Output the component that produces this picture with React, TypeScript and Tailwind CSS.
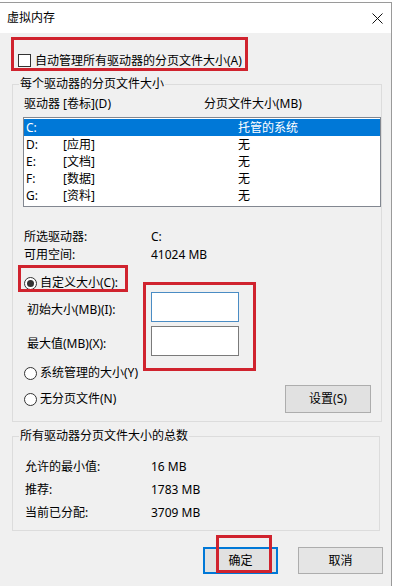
import React from "react";

const drives = [
  { letter: "C:", label: "", size: "托管的系统", selected: true },
  { letter: "D:", label: "[应用]", size: "无" },
  { letter: "E:", label: "[文档]", size: "无" },
  { letter: "F:", label: "[数据]", size: "无" },
  { letter: "G:", label: "[资料]", size: "无" },
];

export default function App() {
  return (
    <div className="relative h-[586px] w-[394px] overflow-hidden bg-white pt-[2px] font-['Noto_Sans','Noto_Sans_CJK_SC',sans-serif] text-[12px] leading-[16px] text-black">
      <div className="flex h-[584px] w-[392px] flex-col border-t border-r border-[#9a9a9a]">
        <header className="flex h-[30px] shrink-0 items-center justify-between bg-white pl-[7px] pr-[8px]">
          <span>虚拟内存</span>
          <svg width="11" height="11" viewBox="0 0 11 11" className="mt-[1px]">
            <path d="M0.5 0.5 L10.5 10.5 M10.5 0.5 L0.5 10.5" stroke="#111" strokeWidth="1" />
          </svg>
        </header>

        <main className="flex-1 bg-[#f0f0f0]">
          <label className="ml-[18px] mt-[21px] flex h-[13px] items-center gap-[4px]">
            <span className="h-[13px] w-[13px] border border-[#333] bg-white" />
            <span>自动管理所有驱动器的分页文件大小(A)</span>
          </label>

          <fieldset className="ml-[12px] mt-[9px] w-[368px] border border-[#dcdcdc] pb-[8px] pl-[6px]">
            <legend className="px-[1px] leading-[16px]">每个驱动器的分页文件大小</legend>
            <div className="pl-[4px]">
              <div className="mt-[4px] grid grid-cols-[180px_1fr] pl-[1px]">
                <span>驱动器 [卷标](D)</span>
                <span>分页文件大小(MB)</span>
              </div>

              <div className="mt-[5px] h-[90px] w-[358px] border border-[#828790] bg-white pt-[1px]">
                {drives.map((d) => (
                  <div
                    key={d.letter}
                    className={
                      d.selected
                        ? "grid h-[17px] grid-cols-[37px_175px_1fr] items-center bg-[#0078d7] pl-[2px] text-white"
                        : "grid h-[17px] grid-cols-[37px_175px_1fr] items-center pl-[2px]"
                    }
                  >
                    <span>{d.letter}</span>
                    <span>{d.label}</span>
                    <span>{d.size}</span>
                  </div>
                ))}
              </div>

              <div className="mt-[21px] grid grid-cols-[127px_1fr] pl-[1px] leading-[18px]">
                <span>所选驱动器:</span>
                <span>C:</span>
                <span>可用空间:</span>
                <span>41024 MB</span>
              </div>

              <Radio className="mt-[10px]" checked label="自定义大小(C):" />

              <div className="grid grid-cols-[124px_88px] gap-y-[4px] pl-[4px]">
                <span className="flex items-center pt-[5px]">初始大小(MB)(I):</span>
                <span className="h-[30px] border border-[#4a8cc4] bg-white" />
                <span className="flex items-center pt-[5px]">最大值(MB)(X):</span>
                <span className="h-[30px] border border-[#7a7a7a] bg-white" />
              </div>

              <Radio className="mt-[8px]" label="系统管理的大小(Y)" />

              <div className="mt-[3px] flex h-[28px] items-center justify-between pr-[10px]">
                <Radio label="无分页文件(N)" />
                <button className="h-[28px] w-[86px] border border-[#adadad] bg-[#e1e1e1]">设置(S)</button>
              </div>
            </div>
          </fieldset>

          <fieldset className="ml-[12px] mt-[6px] w-[368px] border border-[#dcdcdc] pb-[6px] pl-[6px]">
            <legend className="px-[1px] leading-[16px]">所有驱动器分页文件大小的总数</legend>
            <div className="mt-[11px] grid grid-cols-[126px_1fr] pl-[6px]">
              {[
                ["允许的最小值:", "16 MB"],
                ["推荐:", "1783 MB"],
                ["当前已分配:", "3709 MB"],
              ].map(([k, v]) => (
                <React.Fragment key={k}>
                  <span className="flex h-[23px] items-center">{k}</span>
                  <span className="flex h-[23px] items-center">{v}</span>
                </React.Fragment>
              ))}
            </div>
          </fieldset>

          <div className="ml-[203px] mt-[16px] flex gap-[20px]">
            <button className="h-[27px] w-[75px] border-2 border-[#0078d7] bg-[#e1e1e1]">确定</button>
            <button className="h-[27px] w-[85px] border border-[#adadad] bg-[#e5e5e5]">取消</button>
          </div>
        </main>
      </div>

      {/* red annotation boxes */}
      <div className="absolute left-[11px] top-[37px] h-[34px] w-[237px] border-[3px] border-[#d0232e]" />
      <div className="absolute left-[18px] top-[265px] h-[27px] w-[110px] border-[3px] border-[#d0232e]" />
      <div className="absolute left-[143px] top-[282px] h-[89px] w-[113px] border-[3px] border-[#d0232e]" />
      <div className="absolute left-[216px] top-[535px] h-[38px] w-[56px] border-[3px] border-[#d0232e]" />
    </div>
  );
}

function Radio({ label, checked, className }: { label: string; checked?: boolean; className?: string }) {
  return (
    <div className={"flex h-[18px] items-center gap-[3px] pl-[1px] " + (className ?? "")}>
      <span className="flex h-[13px] w-[13px] items-center justify-center rounded-full border border-[#333] bg-white">
        {checked && <span className="h-[7px] w-[7px] rounded-full bg-[#333]" />}
      </span>
      <span>{label}</span>
    </div>
  );
}
